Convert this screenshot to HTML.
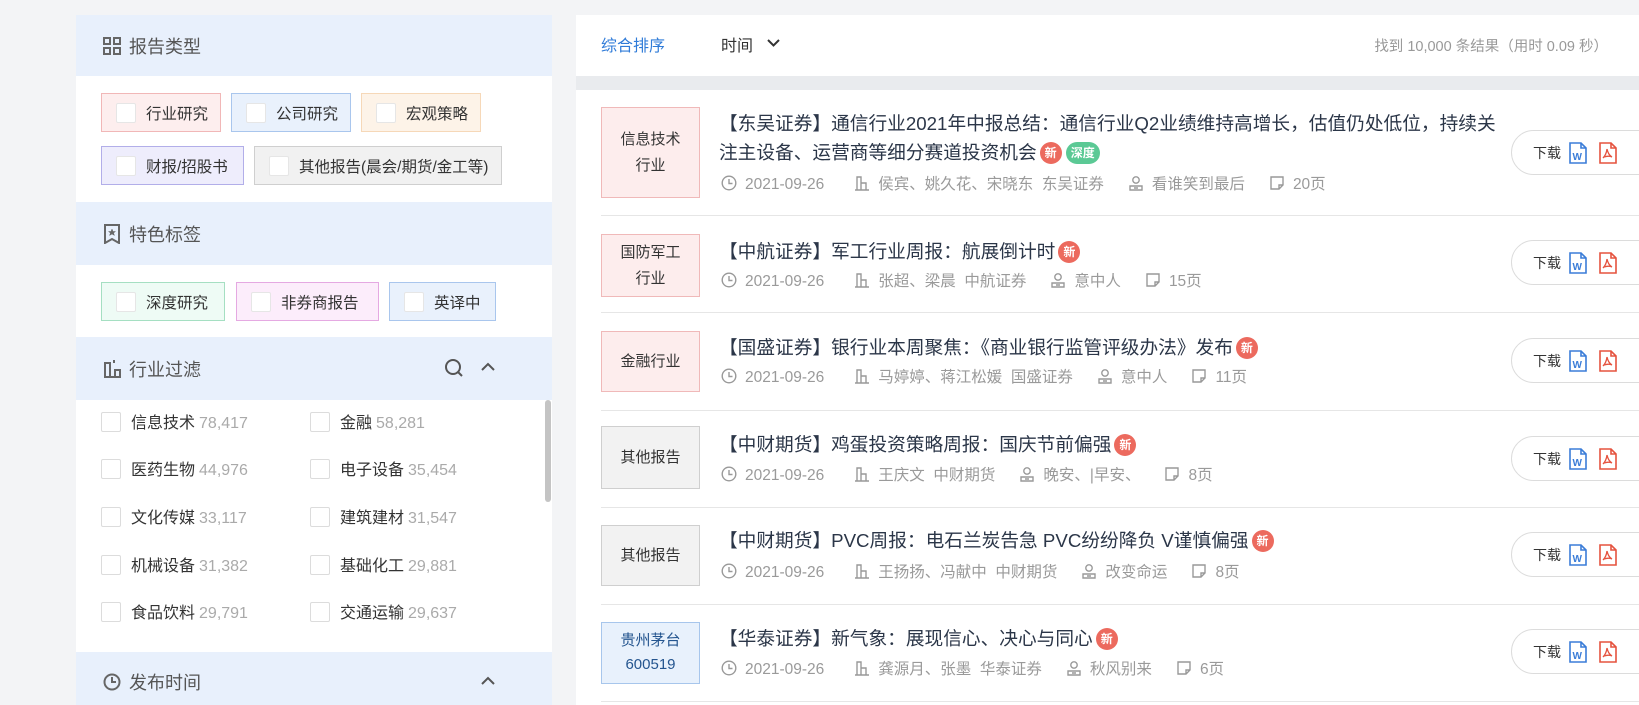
<!DOCTYPE html>
<html><head><meta charset="utf-8"><style>
*{box-sizing:border-box;margin:0;padding:0}
body{width:1639px;height:705px;overflow:hidden;background:#f3f4f6;font-family:"Liberation Sans","Noto Sans CJK SC",sans-serif;position:relative;color:#333}
.a{position:absolute}
.lp{left:76px;top:15px;width:476px;height:690px;background:#fff;overflow:hidden}
.hd{position:absolute;left:0;width:476px;background:#e8f0fc;font-size:18px;color:#555;display:flex;align-items:center;padding-left:27px}
.hd svg{margin-right:8px}
.tag{position:absolute;height:39px;border:1px solid;font-size:15.5px;color:#333;display:flex;align-items:center;padding-left:14px}
.tag i{display:inline-block;width:20px;height:20px;background:#fff;border:1px solid #e6e6e6;border-radius:2px;margin-right:10px}
.it{position:absolute;font-size:16px;color:#333;line-height:22px;white-space:nowrap}
.it i{display:inline-block;width:20px;height:20px;border:1px solid #dcdcdc;border-radius:2px;margin-right:10px;vertical-align:-4px}
.it span{color:#aaa;margin-left:4px}
.rp{left:576px;top:15px;width:1063px;height:61px;background:#fff}
.gb{left:576px;top:76px;width:1063px;height:14px;background:#e9ebee}
.list{left:576px;top:90px;width:1063px;height:615px;background:#fff}
.sep{position:absolute;left:601px;width:1038px;height:1px;background:#e6e6e6}
.bx{position:absolute;left:601px;width:99px;border:1px solid #f0b9b9;background:#fdeded;font-size:15px;color:#333;display:flex;align-items:center;justify-content:center;text-align:center;line-height:26px}
.bx.g{background:#f2f2f2;border-color:#cfcfcf}
.bx.bl{background:#e8f1fc;border-color:#a7c6ec;color:#24558f}
.tt{position:absolute;left:719px;font-size:18.7px;color:#2b3648;line-height:29px;white-space:nowrap}
.nw{display:inline-block;width:22px;height:22px;border-radius:50%;background:#ec6a5e;color:#fff;font-size:12px;line-height:22px;text-align:center;vertical-align:2px;font-weight:bold;margin-left:3px}
.sd{display:inline-block;height:22px;padding:0 5px;border-radius:11px;background:#5bc995;color:#fff;font-size:12px;line-height:22px;vertical-align:2px;font-weight:bold;margin-left:4px}
.mt{position:absolute;left:721px;font-size:15.5px;color:#9a9a9a;white-space:nowrap;line-height:20px}
.mt svg{margin-right:8px;vertical-align:-2px}
.btn{position:absolute;left:1511px;width:160px;height:45px;border:1px solid #dcdcdc;border-radius:23px;display:flex;align-items:center;padding-left:21px;font-size:14px;color:#333}
.btn svg{margin-left:8px}
</style></head><body>
<div class="a lp">
 <div class="hd" style="top:0;height:61px"><svg width="18" height="18" viewBox="0 0 18 18" fill="none" stroke="#666" stroke-width="2"><rect x="1" y="1" width="6" height="6"/><rect x="11" y="1" width="6" height="6"/><rect x="1" y="11" width="6" height="6"/><rect x="11" y="11" width="6" height="6"/></svg>报告类型</div>
 <div class="tag" style="left:25px;top:78px;width:120px;background:#fdeeee;border-color:#f1b7b7"><i></i>行业研究</div>
 <div class="tag" style="left:155px;top:78px;width:120px;background:#e9f1fc;border-color:#a9c6ed"><i></i>公司研究</div>
 <div class="tag" style="left:285px;top:78px;width:120px;background:#fdf3e8;border-color:#f6d8b8"><i></i>宏观策略</div>
 <div class="tag" style="left:25px;top:131px;width:143px;background:#eeedfc;border-color:#b2aee9"><i></i>财报/招股书</div>
 <div class="tag" style="left:178px;top:131px;width:248px;background:#f1f1f1;border-color:#cfcfcf"><i></i>其他报告(晨会/期货/金工等)</div>
 <div class="hd" style="top:187px;height:63px"><svg width="18" height="20" viewBox="0 0 18 20" fill="none" stroke="#666" stroke-width="2"><path d="M2 1h14v18l-7-4-7 4z"/><path d="M9 5l1 2.5h2.5l-2 1.5 1 2.5-2.5-1.5-2.5 1.5 1-2.5-2-1.5h2.5z" fill="#666" stroke-width=".5"/></svg>特色标签</div>
 <div class="tag" style="left:25px;top:267px;width:124px;background:#eefbf5;border-color:#a5dfc2"><i></i>深度研究</div>
 <div class="tag" style="left:160px;top:267px;width:143px;background:#fcedfb;border-color:#e5a9e2"><i></i>非券商报告</div>
 <div class="tag" style="left:313px;top:267px;width:107px;background:#e9f1fc;border-color:#a9c6ed"><i></i>英译中</div>
 <div class="hd" style="top:322px;height:63px"><svg width="18" height="20" viewBox="0 0 18 20" fill="none" stroke="#666" stroke-width="2"><rect x="2" y="4" width="5" height="14"/><path d="M7 18h10V11h-5v7M11 1v3M2 4h5"/></svg>行业过滤
  <svg class="a" style="left:368px;top:21px" width="20" height="20" viewBox="0 0 20 20" fill="none" stroke="#555" stroke-width="2"><circle cx="9" cy="9" r="7"/><path d="M14 14l4 4"/></svg>
  <svg class="a" style="left:404px;top:25px" width="16" height="10" viewBox="0 0 16 10" fill="none" stroke="#555" stroke-width="2"><path d="M2 8l6-6 6 6"/></svg></div>
 <div class="it" style="left:25px;top:397px"><i></i>信息技术<span>78,417</span></div>
 <div class="it" style="left:234px;top:397px"><i></i>金融<span>58,281</span></div>
 <div class="it" style="left:25px;top:444px"><i></i>医药生物<span>44,976</span></div>
 <div class="it" style="left:234px;top:444px"><i></i>电子设备<span>35,454</span></div>
 <div class="it" style="left:25px;top:492px"><i></i>文化传媒<span>33,117</span></div>
 <div class="it" style="left:234px;top:492px"><i></i>建筑建材<span>31,547</span></div>
 <div class="it" style="left:25px;top:540px"><i></i>机械设备<span>31,382</span></div>
 <div class="it" style="left:234px;top:540px"><i></i>基础化工<span>29,881</span></div>
 <div class="it" style="left:25px;top:587px"><i></i>食品饮料<span>29,791</span></div>
 <div class="it" style="left:234px;top:587px"><i></i>交通运输<span>29,637</span></div>
 <div class="a" style="left:469px;top:385px;width:6px;height:102px;background:#c4c4c4;border-radius:3px"></div>
 <div class="hd" style="top:637px;height:60px"><svg width="18" height="18" viewBox="0 0 18 18" fill="none" stroke="#666" stroke-width="2"><circle cx="9" cy="9" r="7.5"/><path d="M9 4v5h4"/></svg>发布时间
  <svg class="a" style="left:404px;top:24px" width="16" height="10" viewBox="0 0 16 10" fill="none" stroke="#555" stroke-width="2"><path d="M2 8l6-6 6 6"/></svg></div>
</div>

<div class="a rp">
 <div class="a" style="left:25px;top:17px;font-size:16px;color:#2f7bd8">综合排序</div>
 <div class="a" style="left:145px;top:17px;font-size:16px;color:#333">时间</div>
 <svg class="a" style="left:191px;top:24px" width="13" height="8" viewBox="0 0 13 8" fill="none" stroke="#333" stroke-width="2"><path d="M1 1l5.5 5.5L12 1"/></svg>
 <div class="a" style="right:31px;top:20px;font-size:14.5px;color:#999;white-space:nowrap">找到 10,000 条结果（用时 0.09 秒）</div>
</div>
<div class="a gb"></div>
<div class="a list"></div>

<svg width="0" height="0" style="position:absolute"><defs>
<symbol id="clk" viewBox="0 0 16 16"><circle cx="8" cy="8" r="6.8" fill="none" stroke="#999" stroke-width="1.4"/><path d="M8 4v4.5h3.5" fill="none" stroke="#999" stroke-width="1.4"/></symbol>
<symbol id="bld" viewBox="0 0 16 16"><path d="M1 15h14M3 15V2h4v13M7 8h5v7" fill="none" stroke="#999" stroke-width="1.4"/></symbol>
<symbol id="usr" viewBox="0 0 16 16"><circle cx="8" cy="5" r="3.2" fill="none" stroke="#999" stroke-width="1.4"/><path d="M2 15v-4h12v4zM6 13h4" fill="none" stroke="#999" stroke-width="1.4"/></symbol>
<symbol id="pg" viewBox="0 0 16 16"><path d="M2 2h12v8l-4 4H2zM10 14v-4h4" fill="none" stroke="#999" stroke-width="1.4"/></symbol>
<symbol id="w" viewBox="0 0 18 22"><path d="M1 1h11l5 5v15H1z" fill="#fff" stroke="#3b7dd8" stroke-width="1.6"/><path d="M12 1v5h5" fill="none" stroke="#3b7dd8" stroke-width="1.6"/><text x="3.5" y="18" font-size="10" font-weight="bold" fill="#3b7dd8" font-family="Liberation Sans">W</text></symbol>
<symbol id="p" viewBox="0 0 18 22"><path d="M1 1h11l5 5v15H1z" fill="#fff" stroke="#e5533f" stroke-width="1.6"/><path d="M12 1v5h5" fill="none" stroke="#e5533f" stroke-width="1.6"/><path d="M8 7c1 4 2 6 5 8M8 7c-.5 4-2 7-4 9M5 15c3-1 6-1 8 0" fill="none" stroke="#e5533f" stroke-width="1.3"/></symbol>
</defs></svg>

<!-- row1 -->
<div class="bx" style="top:107px;height:91px">信息技术<br>行业</div>
<div class="tt" style="top:109px">【东吴证券】通信行业2021年中报总结：通信行业Q2业绩维持高增长，估值仍处低位，持续关<br>注主设备、运营商等细分赛道投资机会<span class="nw">新</span><span class="sd">深度</span></div>
<div class="mt" style="top:175px"><svg width="16" height="16"><use href="#clk"/></svg>2021-09-26<svg width="16" height="16" style="margin-left:30px"><use href="#bld"/></svg>侯宾、姚久花、宋晓东&nbsp;&nbsp;东吴证券<svg width="16" height="16" style="margin-left:24px"><use href="#usr"/></svg>看谁笑到最后<svg width="16" height="16" style="margin-left:24px"><use href="#pg"/></svg>20页</div>
<div class="btn" style="top:130px">下载<svg width="18" height="22"><use href="#w"/></svg><svg width="18" height="22" style="margin-left:12px"><use href="#p"/></svg></div>
<div class="sep" style="top:215px"></div>
<!-- row2 -->
<div class="bx" style="top:234px;height:63px">国防军工<br>行业</div>
<div class="tt" style="top:237px">【中航证券】军工行业周报：航展倒计时<span class="nw">新</span></div>
<div class="mt" style="top:272px"><svg width="16" height="16"><use href="#clk"/></svg>2021-09-26<svg width="16" height="16" style="margin-left:30px"><use href="#bld"/></svg>张超、梁晨&nbsp;&nbsp;中航证券<svg width="16" height="16" style="margin-left:24px"><use href="#usr"/></svg>意中人<svg width="16" height="16" style="margin-left:24px"><use href="#pg"/></svg>15页</div>
<div class="btn" style="top:240px">下载<svg width="18" height="22"><use href="#w"/></svg><svg width="18" height="22" style="margin-left:12px"><use href="#p"/></svg></div>
<div class="sep" style="top:312px"></div>
<!-- row3 -->
<div class="bx" style="top:331px;height:61px">金融行业</div>
<div class="tt" style="top:333px">【国盛证券】银行业本周聚焦：《商业银行监管评级办法》发布<span class="nw">新</span></div>
<div class="mt" style="top:368px"><svg width="16" height="16"><use href="#clk"/></svg>2021-09-26<svg width="16" height="16" style="margin-left:30px"><use href="#bld"/></svg>马婷婷、蒋江松媛&nbsp;&nbsp;国盛证券<svg width="16" height="16" style="margin-left:24px"><use href="#usr"/></svg>意中人<svg width="16" height="16" style="margin-left:24px"><use href="#pg"/></svg>11页</div>
<div class="btn" style="top:338px">下载<svg width="18" height="22"><use href="#w"/></svg><svg width="18" height="22" style="margin-left:12px"><use href="#p"/></svg></div>
<div class="sep" style="top:410px"></div>
<!-- row4 -->
<div class="bx g" style="top:426px;height:63px">其他报告</div>
<div class="tt" style="top:430px">【中财期货】鸡蛋投资策略周报：国庆节前偏强<span class="nw">新</span></div>
<div class="mt" style="top:466px"><svg width="16" height="16"><use href="#clk"/></svg>2021-09-26<svg width="16" height="16" style="margin-left:30px"><use href="#bld"/></svg>王庆文&nbsp;&nbsp;中财期货<svg width="16" height="16" style="margin-left:24px"><use href="#usr"/></svg>晚安、|早安、<svg width="16" height="16" style="margin-left:24px"><use href="#pg"/></svg>8页</div>
<div class="btn" style="top:436px">下载<svg width="18" height="22"><use href="#w"/></svg><svg width="18" height="22" style="margin-left:12px"><use href="#p"/></svg></div>
<div class="sep" style="top:507px"></div>
<!-- row5 -->
<div class="bx g" style="top:525px;height:61px">其他报告</div>
<div class="tt" style="top:526px">【中财期货】PVC周报：电石兰炭告急 PVC纷纷降负 V谨慎偏强<span class="nw">新</span></div>
<div class="mt" style="top:563px"><svg width="16" height="16"><use href="#clk"/></svg>2021-09-26<svg width="16" height="16" style="margin-left:30px"><use href="#bld"/></svg>王扬扬、冯献中&nbsp;&nbsp;中财期货<svg width="16" height="16" style="margin-left:24px"><use href="#usr"/></svg>改变命运<svg width="16" height="16" style="margin-left:24px"><use href="#pg"/></svg>8页</div>
<div class="btn" style="top:532px">下载<svg width="18" height="22"><use href="#w"/></svg><svg width="18" height="22" style="margin-left:12px"><use href="#p"/></svg></div>
<div class="sep" style="top:604px"></div>
<!-- row6 -->
<div class="bx bl" style="top:622px;height:62px;line-height:24px">贵州茅台<br>600519</div>
<div class="tt" style="top:624px">【华泰证券】新气象：展现信心、决心与同心<span class="nw">新</span></div>
<div class="mt" style="top:660px"><svg width="16" height="16"><use href="#clk"/></svg>2021-09-26<svg width="16" height="16" style="margin-left:30px"><use href="#bld"/></svg>龚源月、张墨&nbsp;&nbsp;华泰证券<svg width="16" height="16" style="margin-left:24px"><use href="#usr"/></svg>秋风别来<svg width="16" height="16" style="margin-left:24px"><use href="#pg"/></svg>6页</div>
<div class="btn" style="top:629px">下载<svg width="18" height="22"><use href="#w"/></svg><svg width="18" height="22" style="margin-left:12px"><use href="#p"/></svg></div>
<div class="sep" style="top:701px"></div>
</body></html>
